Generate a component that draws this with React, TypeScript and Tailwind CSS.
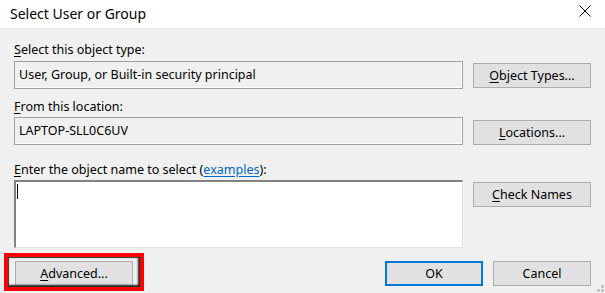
import React from "react";

const font = { fontFamily: '"Noto Sans", "Open Sans", Arial, sans-serif' };

function Btn({ children, className = "" }: { children: React.ReactNode; className?: string }) {
  return (
    <div
      className={`flex h-[25px] items-center justify-center border border-[#adadad] bg-[#e1e1e1] text-[12.5px] text-black ${className}`}
    >
      {children}
    </div>
  );
}

export default function App() {
  return (
    <div className="relative h-[293px] w-[605px] overflow-hidden bg-[#f0f0f0] text-black" style={font}>
      {/* title bar */}
      <div className="flex h-[29px] items-center justify-between border-b border-[#e8e8e8] bg-white pl-[10px] pr-[14px]">
        <span className="text-[14px] leading-none text-black">Select User or Group</span>
        <svg width="12" height="12" viewBox="0 0 12 12" className="mb-[7px]">
          <path d="M0.5 0.5 L11.5 11.5 M11.5 0.5 L0.5 11.5" stroke="#000" strokeWidth="1" />
        </svg>
      </div>

      <div className="flex flex-col px-[14px] pt-[13px] text-[12.5px] leading-[16px] [&_.u]:underline [&_.u]:underline-offset-2">
        <div>
          <span className="u">S</span>elect this object type:
        </div>
        <div className="mt-[3px] flex items-start gap-[10px]">
          <div className="flex h-[28px] w-[449px] items-center border border-[#a0a0a0] pl-[4px] shadow-[inset_-1px_-1px_0_#ffffff]">
            User, Group, or Built-in security principal
          </div>
          <Btn className="mt-[2px] w-[118px]">
            <span className="u">O</span>bject Types...
          </Btn>
        </div>

        <div className="mt-[10px]">
          <span className="u">F</span>rom this location:
        </div>
        <div className="mt-[2px] flex items-start gap-[10px]">
          <div className="flex h-[28px] w-[449px] items-center border border-[#a0a0a0] pl-[4px] shadow-[inset_-1px_-1px_0_#ffffff]">
            LAPTOP-SLL0C6UV
          </div>
          <Btn className="mt-[3px] w-[118px]">
            <span className="u">L</span>ocations...
          </Btn>
        </div>

        <div className="mt-[17px]">
          <span className="u">E</span>nter the object name to select (
          <span className="text-[#0066cc] underline underline-offset-2">examples</span>):
        </div>
        <div className="mt-[2px] flex items-start gap-[10px]">
          <div className="h-[68px] w-[449px] border-l-2 border-t-2 border-b border-r border-l-[#828282] border-t-[#828282] border-b-[#e3e3e3] border-r-[#e3e3e3] bg-white pl-[1px] pt-[2px]">
            <div className="h-[15px] w-[1px] bg-black" />
          </div>
          <Btn className="mt-[2px] w-[118px]">
            <span className="u">C</span>heck Names
          </Btn>
        </div>

        <div className="mt-[13px] flex items-start">
          <div className="relative ml-[1px]">
            <Btn className="w-[118px]">
              <span className="u">A</span>dvanced...
            </Btn>
            <div className="pointer-events-none absolute left-[-11px] top-[-8px] h-[38px] w-[140px] border-[4px] border-[#ff0000] shadow-[inset_1px_1px_1px_#333,inset_-2px_-2px_2px_#222]" />
          </div>
          <div className="ml-auto flex gap-[10px]">
            <div className="flex h-[25px] w-[98px] items-center justify-center border-2 border-[#0078d7] bg-[#e1e1e1]">
              OK
            </div>
            <Btn className="w-[98px]">Cancel</Btn>
          </div>
        </div>
      </div>

      {/* resize grip */}
      <svg className="absolute bottom-0 right-0" width="10" height="9" viewBox="0 0 10 9">
        <rect x="6" y="1" width="3" height="3" fill="#c4c4c4" />
        <rect x="2" y="5" width="3" height="3" fill="#c4c4c4" />
        <rect x="6" y="5" width="3" height="3" fill="#c4c4c4" />
      </svg>
    </div>
  );
}
